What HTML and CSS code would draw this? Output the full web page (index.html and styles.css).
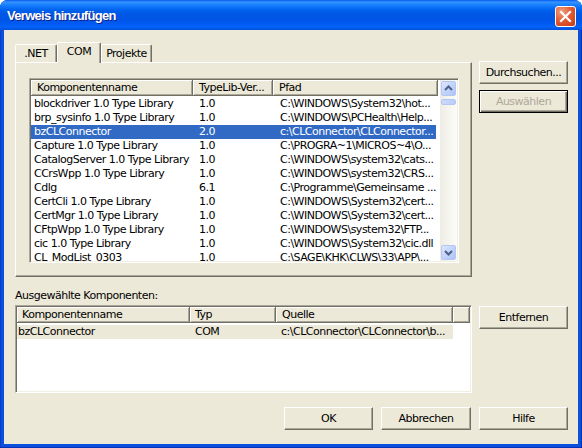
FILE: index.html
```html
<!DOCTYPE html>
<html lang="de">
<head>
<meta charset="utf-8">
<title>Verweis hinzufügen</title>
<link rel="stylesheet" href="styles.css">
</head>
<body>
<div class="window">
  <div class="titlebar">
    <span class="title">Verweis hinzufügen</span>
    <div class="close">
      <svg width="21" height="21" viewBox="0 0 21 21"><path d="M6 6 L15 15 M15 6 L6 15" stroke="#fff" stroke-width="2.2" stroke-linecap="square" fill="none"/></svg>
    </div>
  </div>
  <div class="client">
    <div class="top-row">
      <div class="tabs-area">
        <div class="tabstrip">
          <div class="tab tab-net">.NET</div>
          <div class="tab tab-com active">COM</div>
          <div class="tab tab-proj">Projekte</div>
        </div>
        <div class="tabpanel">
          <div class="listview lv1">
            <div class="lv-content">
              <div class="lv-header">
                <div class="hcell w162">Komponentenname</div>
                <div class="hcell w80">TypeLib-Ver...</div>
                <div class="hcell w165">Pfad</div>
              </div>
              <div class="rows">
                <div class="row"><div class="c1">blockdriver 1.0 Type Library</div><div class="c2">1.0</div><div class="c3">C:\WINDOWS\System32\hot...</div></div>
                <div class="row"><div class="c1">brp_sysinfo 1.0 Type Library</div><div class="c2">1.0</div><div class="c3">C:\WINDOWS\PCHealth\Help...</div></div>
                <div class="row selected"><div class="c1">bzCLConnector</div><div class="c2">2.0</div><div class="c3">c:\CLConnector\CLConnector...</div></div>
                <div class="row"><div class="c1">Capture 1.0 Type Library</div><div class="c2">1.0</div><div class="c3">C:\PROGRA~1\MICROS~4\O...</div></div>
                <div class="row"><div class="c1">CatalogServer 1.0 Type Library</div><div class="c2">1.0</div><div class="c3">C:\WINDOWS\system32\cats...</div></div>
                <div class="row"><div class="c1">CCrsWpp 1.0 Type Library</div><div class="c2">1.0</div><div class="c3">C:\WINDOWS\system32\CRS...</div></div>
                <div class="row"><div class="c1">Cdlg</div><div class="c2">6.1</div><div class="c3">C:\Programme\Gemeinsame ...</div></div>
                <div class="row"><div class="c1">CertCli 1.0 Type Library</div><div class="c2">1.0</div><div class="c3">C:\WINDOWS\System32\cert...</div></div>
                <div class="row"><div class="c1">CertMgr 1.0 Type Library</div><div class="c2">1.0</div><div class="c3">C:\WINDOWS\System32\cert...</div></div>
                <div class="row"><div class="c1">CFtpWpp 1.0 Type Library</div><div class="c2">1.0</div><div class="c3">C:\WINDOWS\system32\FTP...</div></div>
                <div class="row"><div class="c1">cic 1.0 Type Library</div><div class="c2">1.0</div><div class="c3">C:\WINDOWS\System32\cic.dll</div></div>
                <div class="row"><div class="c1">CL_ModList_0303</div><div class="c2">1.0</div><div class="c3">C:\SAGE\KHK\CLWS\33\APP\...</div></div>
              </div>
            </div>
            <div class="scrollbar">
              <div class="sb-btn"><svg width="15" height="15" viewBox="0 0 15 15"><path d="M4 9 L7.5 5.5 L11 9" stroke="#4D6185" stroke-width="2" fill="none"/></svg></div>
              <div class="sb-thumb"></div>
              <div class="sb-track"></div>
              <div class="sb-btn"><svg width="15" height="15" viewBox="0 0 15 15"><path d="M4 6 L7.5 9.5 L11 6" stroke="#4D6185" stroke-width="2" fill="none"/></svg></div>
            </div>
          </div>
        </div>
      </div>
      <div class="side-buttons first">
        <div class="btn">Durchsuchen...</div>
        <div class="btn default disabled">Auswählen</div>
      </div>
    </div>
    <div class="label">Ausgewählte Komponenten:</div>
    <div class="bottom-row">
      <div class="listview lv2">
        <div class="lv-content">
          <div class="lv-header">
            <div class="hcell w173">Komponentenname</div>
            <div class="hcell w86">Typ</div>
            <div class="hcell w177">Quelle</div>
            <div class="hcell w17"></div>
          </div>
          <div class="rows rows2">
            <div class="row row2 inactive-sel"><div class="d1">bzCLConnector</div><div class="d2">COM</div><div class="d3">c:\CLConnector\CLConnector\b...</div></div>
          </div>
        </div>
      </div>
      <div class="side-buttons second">
        <div class="btn">Entfernen</div>
      </div>
    </div>
    <div class="footer">
      <div class="btn">OK</div>
      <div class="btn">Abbrechen</div>
      <div class="btn">Hilfe</div>
    </div>
  </div>
</div>
</body>
</html>
```

FILE: styles.css
```css
* { box-sizing: border-box; }
html, body { margin: 0; padding: 0; background: #ffffff; }
body {
  font-family: "DejaVu Sans", Tahoma, sans-serif;
  font-size: 11px;
  letter-spacing: -0.5px;
  color: #000;
}
.window {
  width: 582px;
  height: 448px;
  display: flex;
  flex-direction: column;
  background: #0A50DC;
  border-radius: 8px 8px 0 0;
  overflow: hidden;
  box-shadow: inset -1px -1px 0 #0630B8, inset 1px 0 0 #0740C8;
}
.titlebar {
  height: 30px;
  flex: none;
  display: flex;
  align-items: center;
  justify-content: space-between;
  padding: 0 6px 0 7px;
  background: linear-gradient(to bottom,
    #0058EE 0px, #3A93FF 2px, #288EFF 3px, #1279FC 6px,
    #0062EE 10px, #0057E5 14px, #0055E6 20px,
    #005BF3 24px, #0463F8 27px, #0050DA 30px);
}
.title {
  font-family: "Liberation Sans", Arial, sans-serif;
  font-weight: bold;
  font-size: 13px;
  letter-spacing: -0.7px;
  color: #fff;
  text-shadow: 1px 1px 0 #0F1F8C;
}
.close {
  width: 21px;
  height: 21px;
  margin-top: 2px;
  border: 1px solid #fff;
  border-radius: 3px;
  background: radial-gradient(circle at 30% 25%, #F0A080 0%, #E35D36 45%, #C63A14 100%);
  display: flex;
}
.close svg { margin: -1px; }
.client {
  flex: 1;
  margin: 0 4px 4px 4px;
  background: #ECE9D8;
  padding: 12px 10px 0 11px;
  display: flex;
  flex-direction: column;
}
.top-row { display: flex; gap: 7px; }
.tabs-area { width: 457px; }
.tabstrip {
  display: flex;
  height: 20px;
  align-items: flex-end;
  position: relative;
  z-index: 1;
}
.tab {
  height: 18px;
  line-height: 17px;
  text-align: center;
  background: #ECE9D8;
  border-top: 1px solid #fff;
  border-left: 1px solid #fff;
  border-right: 1px solid #716F64;
  box-shadow: inset -1px 0 0 #ACA899;
  border-radius: 2px 2px 0 0;
}
.tab-net { width: 42px; }
.tab-com { width: 44px; }
.tab-proj { width: 51px; }
.tab.active {
  height: 21px;
  margin-bottom: -1px;
  line-height: 18px;
}
.tabpanel {
  height: 215px;
  border-top: 1px solid #fff;
  border-left: 1px solid #fff;
  border-right: 1px solid #716F64;
  border-bottom: 1px solid #716F64;
  box-shadow: inset -1px -1px 0 #ACA899;
  padding: 15px 0 0 13px;
}
.listview {
  display: flex;
  background: #fff;
  border-top: 1px solid #ACA899;
  border-left: 1px solid #ACA899;
  border-right: 1px solid #fff;
  border-bottom: 1px solid #fff;
  box-shadow: inset 1px 1px 0 #716F64, inset -1px -1px 0 #F1EFE2;
  padding: 1px;
  overflow: hidden;
}
.lv1 { width: 430px; height: 185px; }
.lv2 { width: 457px; height: 88px; }
.lv-content { flex: 1; overflow: hidden; }
.lv-header { display: flex; height: 16px; }
.hcell {
  flex: none;
  height: 16px;
  line-height: 15px;
  padding: 0 6px;
  background: #ECE9D8;
  border-right: 1px solid #716F64;
  border-bottom: 1px solid #716F64;
  box-shadow: inset 1px 1px 0 #fff, inset -1px -1px 0 #ACA899;
  white-space: nowrap;
  overflow: hidden;
}
.w162 { width: 162px; }
.w80 { width: 80px; }
.w165 { width: 165px; }
.w173 { width: 173px; padding-left: 5px; }
.w86 { width: 86px; padding-left: 5px; }
.w177 { width: 177px; }
.w17 { width: 17px; }
.rows { padding-top: 1px; }
.rows2 { padding-top: 2px; }
.row {
  display: flex;
  height: 14px;
  line-height: 14px;
  width: 405px;
  white-space: nowrap;
}
.row > div { overflow: hidden; flex: none; }
.c1 { width: 162px; padding-left: 3px; }
.c2 { width: 80px; padding-left: 6px; }
.c3 { width: 163px; padding-left: 7px; }
.row.selected { background: #316AC5; color: #fff; }
.row2 { width: 436px; }
.d1 { width: 173px; padding-left: 1px; }
.d2 { width: 86px; padding-left: 5px; }
.d3 { width: 177px; padding-left: 5px; }
.inactive-sel { background: #ECE9D8; }
.scrollbar {
  width: 17px;
  flex: none;
  display: flex;
  flex-direction: column;
  background: linear-gradient(to right, #EEEDE5, #FCFCF8);
  padding: 1px;
}
.sb-btn {
  width: 15px;
  height: 15px;
  border: 1px solid #B4C7F1;
  border-radius: 2px;
  background: linear-gradient(135deg, #DDE7FE 0%, #C3D4FC 50%, #AFC3F4 100%);
  display: flex;
  align-items: center;
  justify-content: center;
}
.sb-btn svg { margin: -1px; }
.sb-thumb {
  margin-top: 3px;
  height: 6px;
  border: 1px solid #B4C7F1;
  border-radius: 2px;
  background: linear-gradient(to right, #CCDAFC, #BACCF8);
}
.sb-track { flex: 1; }
.side-buttons {
  width: 89px;
  flex: none;
  display: flex;
  flex-direction: column;
  gap: 6px;
}
.side-buttons.first { padding-top: 19px; }
.side-buttons.second { padding-top: 1px; }
.btn {
  width: 89px;
  height: 23px;
  line-height: 21px;
  text-align: center;
  background: #ECE9D8;
  border-top: 1px solid #fff;
  border-left: 1px solid #fff;
  border-right: 1px solid #716F64;
  border-bottom: 1px solid #716F64;
  box-shadow: inset -1px -1px 0 #ACA899;
  white-space: nowrap;
}
.btn.default {
  border: 1px solid #000;
  box-shadow: inset 1px 1px 0 #fff, inset -1px -1px 0 #716F64, inset -2px -2px 0 #ACA899;
}
.btn.disabled { color: #ACA899; }
.label {
  margin-top: 12px;
  height: 13px;
  line-height: 13px;
}
.bottom-row { display: flex; gap: 7px; margin-top: 3px; }
.footer {
  display: flex;
  justify-content: flex-end;
  gap: 8px;
  margin-top: 14px;
}
.footer .btn:nth-child(2) { width: 90px; }
```
